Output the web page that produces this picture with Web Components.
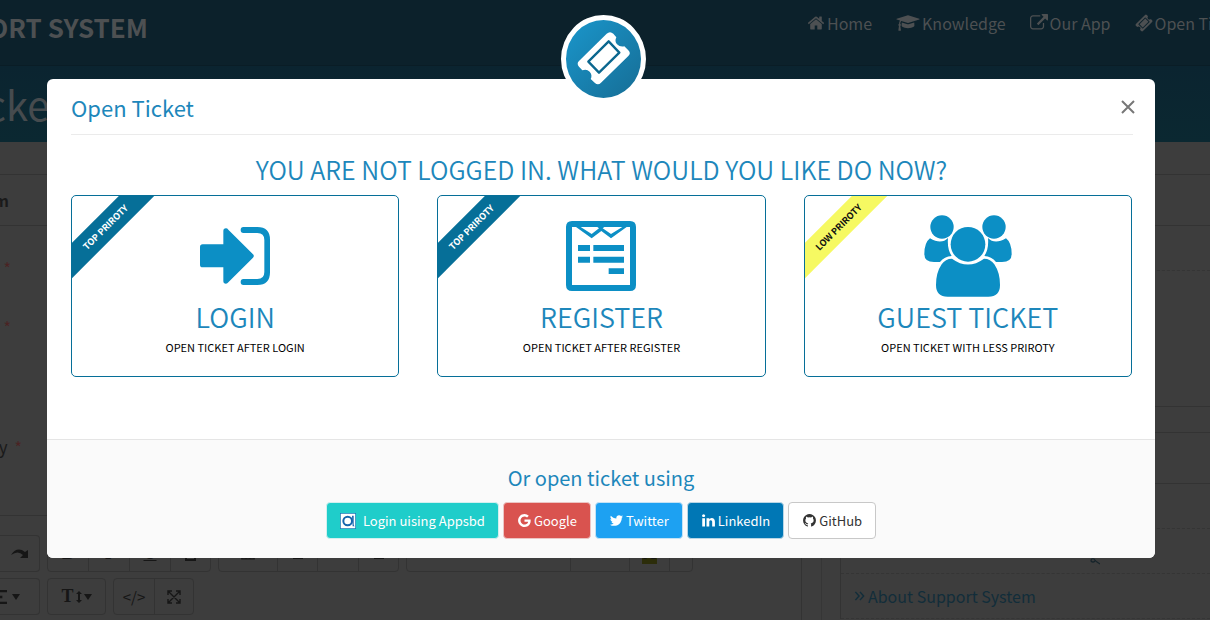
<!DOCTYPE html>
<html lang="en">
<head>
<meta charset="utf-8">
<title>Support System - Open Ticket</title>
<style>
  body {
    display: flex;
    flex-direction: column;
    margin: 0;
    height: 100vh;
    overflow: hidden;
    background: #3d3d3d;
    color: #1a1a1a;
    font-family: "Noto Sans CJK SC", "Noto Sans", sans-serif;
    font-size: 16px;
    --brand: #1d87bb;
    --brand-dark: #066f98;
    --rule: #333;
  }
  .columns { display: flex; flex: 1; min-height: 0; overflow: hidden; }
  ticket-form { flex: 1; }
  side-column { flex: 0 0 389px; }
</style>
</head>
<body>
<site-header></site-header>
<page-banner>Open Ticket</page-banner>
<div class="columns">
  <ticket-form></ticket-form>
  <side-column></side-column>
</div>
<ticket-modal heading="Open Ticket">
  <choice-card icon="login" ribbon="TOP PRIROTY" heading="LOGIN">OPEN TICKET AFTER LOGIN</choice-card>
  <choice-card icon="register" ribbon="TOP PRIROTY" heading="REGISTER">OPEN TICKET AFTER REGISTER</choice-card>
  <choice-card icon="guests" ribbon="LOW PRIROTY" low heading="GUEST TICKET">OPEN TICKET WITH LESS PRIROTY</choice-card>
  <social-button slot="social" kind="appsbd">Login uising Appsbd</social-button>
  <social-button slot="social" kind="google">Google</social-button>
  <social-button slot="social" kind="twitter">Twitter</social-button>
  <social-button slot="social" kind="linkedin">LinkedIn</social-button>
  <social-button slot="social" kind="github">GitHub</social-button>
</ticket-modal>

<script>
const fa = (d, w = 1792) => `<svg viewBox="0 0 ${w} 1792" aria-hidden="true"><path d="${d}"/></svg>`;
const ICONS = {
  home: fa("M1472 992v480q0 26-19 45t-45 19h-384v-384h-256v384h-384q-26 0-45-19t-19-45v-480q0-1 .5-3t.5-3l575-474 575 474q1 2 1 6zm223-69l-62 74q-8 9-21 11h-3q-13 0-21-7l-692-577-692 577q-12 8-24 7-13-2-21-11l-62-74q-8-10-7-23.5t11-21.5l719-599q32-26 76-26t76 26l244 204v-195q0-14 9-23t23-9h192q14 0 23 9t9 23v408l219 182q10 8 11 21.5t-7 23.5z"),
  cap: fa("M1774 836l18 316q4 69-82 128t-235 93.5-323 34.5-323-34.5-235-93.5-82-128l18-316 574 181q22 7 48 7t48-7zm530-324q0 23-22 31l-1120 352q-4 1-10 1t-10-1l-652-206q-43 34-71 111.5t-34 178.5q63 36 63 109 0 69-58 107l58 433q2 14-8 25-9 11-24 11h-192q-15 0-24-11-10-11-8-25l58-433q-58-38-58-107 0-73 65-111 11-207 98-330l-333-104q-22-8-22-31t22-31l1120-352q4-1 10-1t10 1l1120 352q22 8 22 31z", 2304),
  external: fa("M1408 928v320q0 119-84.5 203.5t-203.5 84.5h-832q-119 0-203.5-84.5t-84.5-203.5v-832q0-119 84.5-203.5t203.5-84.5h704q14 0 23 9t9 23v64q0 14-9 23t-23 9h-704q-66 0-113 47t-47 113v832q0 66 47 113t113 47h832q66 0 113-47t47-113v-320q0-14 9-23t23-9h64q14 0 23 9t9 23zm384-864v512q0 26-19 45t-45 19-45-19l-176-176-652 652q-10 10-23 10t-23-10l-114-114q-10-10-10-23t10-23l652-652-176-176q-19-19-19-45t19-45 45-19h512q26 0 45 19t19 45z"),
  ticket: fa("M1024 452l316 316-572 572-316-316zm-211 979l618-618q19-19 19-45t-19-45l-362-362q-18-18-45-18t-45 18l-618 618q-19 19-19 45t19 45l362 362q18 18 45 18t45-18zm889-637l-907 908q-37 37-90.5 37t-90.5-37l-126-126q56-56 56-136t-56-136-136-56-136 56l-125-126q-37-37-37-90.5t37-90.5l907-906q37-37 90.5-37t90.5 37l125 125q-56 56-56 136t56 136 136 56 136-56l126 125q37 37 37 90.5t-37 90.5z"),
  google: fa("M896 786h725q12 67 12 128 0 217-91 387.5t-259.5 266.5-386.5 96q-157 0-299-60.5t-245-163.5-163.5-245-60.5-299 60.5-299 163.5-245 245-163.5 299-60.5q300 0 515 201l-209 201q-123-119-306-119-129 0-238.5 65t-173.5 176.5-64 243.5 64 243.5 173.5 176.5 238.5 65q87 0 160-24t120-60 82-82 51.5-87 22.5-78h-436v-264z"),
  twitter: fa("M1684 408q-67 98-162 167 1 14 1 42 0 130-38 259.5t-115.5 248.5-184.5 210.5-258 146-323 54.5q-271 0-496-145 35 4 78 4 225 0 401-138-105-2-188-64.5t-114-159.5q33 5 61 5 43 0 85-11-112-23-185.5-111.5t-73.5-205.5v-4q68 38 146 41-66-44-105-115t-39-154q0-88 44-163 121 149 294.5 238.5t371.5 99.5q-8-38-8-74 0-134 94.5-228.5t228.5-94.5q140 0 236 102 109-21 205-78-37 115-142 178 93-10 186-50z"),
  linkedin: fa("M477 625v991h-330v-991h330zm21-306q1 73-50.5 122t-135.5 49h-2q-82 0-132-49t-50-122q0-74 51.5-122.5t134.5-48.5 133 48.5 51 122.5zm1166 729v568h-329v-530q0-105-40.5-164.5t-126.5-59.5q-63 0-105.5 34.5t-63.5 85.5q-11 30-11 81v553h-329q2-399 2-647t-1-296l-1-48h329v144h-2q20-32 41-56t56.5-52 87-43.5 114.5-15.5q171 0 275 113.5t104 332.5z"),
  github: fa("M896 128q209 0 385.5 103t279.5 279.5 103 385.5q0 251-146.5 451.5t-378.5 277.5q-27 5-40-7t-13-30q0-3 .5-76.5t.5-134.5q0-97-52-142 57-6 102.5-18t94-39 81-66.5 53-105 20.5-150.5q0-119-79-206 37-91-8-204-28-9-81 11t-92 44l-38 24q-93-26-192-26t-192 26q-16-11-42.5-27t-83.5-38.5-85-13.5q-45 113-8 204-79 87-79 206 0 85 20.5 150t52.5 105 80.5 67 94 39 102.5 18q-39 36-49 103-21 10-45 15t-57 5-65.5-21.5-55.5-62.5q-19-32-48.5-52t-49.5-24l-20-3q-21 0-29 4.5t-5 11.5 9 14 13 12l7 5q22 10 43.5 38t31.5 51l10 23q13 38 44 61.5t67 30 69.5 7 55.5-3.5l23-4q0 38 .5 88.5t.5 54.5q0 18-13 30t-40 7q-232-77-378.5-277.5t-146.5-451.5q0-209 103-385.5t279.5-279.5 385.5-103z"),
  appsbd: `<svg viewBox="0 0 48 48" aria-hidden="true"><rect x="1" y="1" width="46" height="46" fill="#fff" stroke="#1b6fb5" stroke-width="2"/><path d="M36 8h5v26q0 5 3 6h-6z" fill="#1565ad"/><circle cx="23" cy="24" r="13" fill="none" stroke="#1565ad" stroke-width="6"/></svg>`,
  angles: `<svg viewBox="0 0 12 12" aria-hidden="true"><path d="M1.500 1.500 5.500 6l-4 4.500M6.500 1.500l4 4.500-4 4.500" fill="none" stroke="currentColor" stroke-width="1.600"/></svg>`,
  login: `<svg viewBox="390 78 270 270" aria-hidden="true"><path d="M428 178h62v-40q0-8 8-8 4 0 7 4l74 74q5 5 0 10l-74 74q-3 4-7 4-8 0-8-8v-41h-62q-8 0-8-8v-53q0-8 8-8z"/><path d="M550 126h42q38 0 38 38v98q0 38-38 38h-42q-8 0-8-9t8-9h42q21 0 21-21v-96q0-21-21-21h-42q-8 0-8-9t8-9z"/></svg>`,
  register: `<svg viewBox="378 78 270 270" aria-hidden="true"><path fill-rule="evenodd" d="M426 108h174q18 0 18 18v174q0 18-18 18h-174q-18 0-18-18v-174q0-18 18-18zm0 18v174h174v-174h-10l-47 34-29-22-29 22-47-34zm26 0l33 21 22-17-5-4zm71 0-5 4 25 17 34-21z"/><path d="M444 180h36v18h-36zM490 180h92v18h-92zM444 215h36v18h-36zM490 215h92v18h-92zM536 250h46v17h-46z"/></svg>`,
  guests: `<svg viewBox="397 78 270 270" aria-hidden="true"><circle cx="454" cy="126" r="35"/><circle cx="610" cy="126" r="35"/><path d="M418 160q34 20 54-1-3 34 11 54-22 1-35 18h-18q-29 0-29-24 0-34 17-47zM646 160q-34 20-54-1 3 34-11 54 22 1 35 18h18q29 0 29-24 0-34-17-47z"/><circle cx="532" cy="178" r="52"/><path d="M484 221q48 35 96 0 20 0 31 17 17 25 17 62 0 35-35 35h-122q-35 0-35-35 0-37 17-62 11-17 31-17z"/></svg>`,
  bigTicket: `<svg viewBox="78 60 225 234" aria-hidden="true"><path fill="#fff" d="M200 101q10-9 20 0l9 11q-6 12 2 21 9 9 22 6l12 12q9 9 0 17l-82 80q-9 10-19 0l-12-11q6-12-3-22-9-9-22-4l-10-11q-8-9 0-17z"/><path fill="none" stroke="#0b678f" stroke-width="7" stroke-linejoin="round" d="M206 124l32 34-61 60-32-33z"/></svg>`,
  close: `<svg viewBox="0 0 14 14" aria-hidden="true"><path d="M1 1l12 12M13 1 1 13" fill="none" stroke="#777" stroke-width="2"/></svg>`,
  redo: `<svg viewBox="0 0 18 12" aria-hidden="true"><path d="M0 7Q6-2 14 4l3-2v8H9l3-3Q7 2 0 7z"/></svg>`,
  align: `<svg viewBox="0 0 12 12" aria-hidden="true"><path d="M0 0h12v2H0zM0 5h8v2H0zM0 10h12v2H0z"/></svg>`,
  caret: `<svg viewBox="0 0 8 6" aria-hidden="true"><path d="M0 0h8L4 6z"/></svg>`,
  updown: `<svg viewBox="0 0 6 12" aria-hidden="true"><path d="M3 0l3 3H4v6h2l-3 3-3-3h2V3H0z"/></svg>`,
  expand: `<svg viewBox="0 0 14 14" aria-hidden="true"><path d="M1 5V1h4M9 1h4v4M13 9v4H9M5 13H1V9M1 1l12 12M13 1 1 13" fill="none" stroke="currentColor" stroke-width="1.400"/></svg>`,
  table: `<svg viewBox="0 0 17 14" aria-hidden="true"><path d="M1 1h15v12H1zM1 5h15M1 9h15M6 1v12M11 1v12" fill="none" stroke="currentColor" stroke-width="1.500"/></svg>`,
  tail: `<svg viewBox="0 0 10 7" aria-hidden="true"><path d="M5 3Q3 5 1 3q0-3 3-2 2 3 6 5" fill="none" stroke="currentColor" stroke-width="1.200"/></svg>`,
  box: `<svg viewBox="0 0 12 14" aria-hidden="true"><path d="M1 1h9v12H1z" fill="none" stroke="currentColor" stroke-width="2"/></svg>`
};

class Base extends HTMLElement {
  connectedCallback() {
    if (this.shadowRoot) return;
    this.attachShadow({ mode: "open" }).innerHTML =
      `<style>:host,*{box-sizing:border-box}svg{display:block;fill:currentColor}h1,h2,h3,p{margin:0;font-weight:400}</style>` + this.render();
  }
}

customElements.define("ui-icon", class extends Base {
  render() {
    return `<style>:host{display:block;flex:none}svg{width:100%;height:100%}</style>${ICONS[this.getAttribute("name")]}`;
  }
});

customElements.define("site-header", class extends Base {
  render() {
    const item = (icon, label, wide) =>
      `<a href="#"><ui-icon name="${icon}" class="${wide ? "wide" : ""}"></ui-icon>${label}</a>`;
    return `<style>
      :host{display:flex;flex:none;justify-content:space-between;height:66px;background:#0c212b;color:#4d5052;border-bottom:1px solid #0a1d26}
      .brand{display:flex;justify-content:flex-end;width:148px;overflow:hidden;white-space:nowrap;font-size:26px;font-weight:700;line-height:54px}
      nav{display:flex;gap:24px;flex:0 0 403px;overflow:hidden;white-space:nowrap;font-size:16px}
      a{display:flex;align-items:center;gap:2px;color:inherit;text-decoration:none;height:46px}
      ui-icon{width:18px;height:18px}
      .wide{width:24px;height:18px}
    </style>
    <div class="brand">SUPPORT SYSTEM</div>
    <nav>${item("home", "Home")}${item("cap", "Knowledge", true)}${item("external", "Our App")}${item("ticket", "Open Ticket")}</nav>`;
  }
});

customElements.define("page-banner", class extends Base {
  render() {
    return `<style>
      :host{display:block;flex:none;height:76px;background:linear-gradient(#0b2430,#0b2831);color:#464b4e}
      h1{display:flex;justify-content:flex-end;width:64px;white-space:nowrap;font-size:40px;line-height:76px}
    </style><h1><slot></slot></h1>`;
  }
});

customElements.define("ticket-form", class extends Base {
  render() {
    const cell = (w, content = "", cls = "") => `<button type="button" class="${cls}" style="width:${w}px">${content}</button>`;
    const icon = (name, cls = "") => `<ui-icon name="${name}" class="${cls}"></ui-icon>`;
    return `<style>
      :host{display:block;margin-top:32px;border:1px solid var(--rule);border-width:1px 1px 0 0;color:#1a1a1a}
      .cut{display:flex;justify-content:flex-end;overflow:hidden;white-space:nowrap;width:11px;line-height:24px;gap:7px}
      .cut i{font-style:normal;font-size:16px;color:#4b2323}
      .head{width:9px;font-weight:700;line-height:50px;font-size:16px}
      .rule{border-top:1px solid var(--rule)}
      .fields{height:290px;padding-top:30px;font-size:17px}
      .fields .cut{margin-bottom:35px}
      .fields .cut:nth-child(3){width:22px;margin-top:96px}
      .bar{display:flex;gap:7px;margin-top:19px}
      .bar + .bar{margin-top:6px}
      .group{display:flex;height:37px;border:1px solid var(--rule);border-radius:4px}
      .group.first{border-left:0;border-radius:0 4px 4px 0}
      button{display:flex;align-items:center;justify-content:center;gap:2px;background:none;border:0;border-left:1px solid var(--rule);padding:0;color:#161616;font:700 18px "Liberation Serif",serif}
      button:first-child{border-left:0}
      button.cutoff{justify-content:flex-end;gap:5px;padding-right:19px}
      ui-icon{width:14px;height:14px}
      .low{width:14px;height:10px}
      .redo{width:18px;height:12px}.caret{width:8px;height:6px}.updown{width:6px;height:12px}
      .thin{font:400 15px "Noto Sans CJK SC","Noto Sans",sans-serif}
      mark{background:#2c2d0a;color:inherit;padding:0 1px}
    </style>
    <div class="cut head">Open Ticket Form</div>
    <div class="rule fields">
      <div class="cut"><span>Name</span><i>*</i></div>
      <div class="cut"><span>Email</span><i>*</i></div>
      <div class="cut"><span>Category</span><i>*</i></div>
    </div>
    <div class="rule"></div>
    <div class="bar">
      <div class="group first">${cell(39, icon("redo", "redo"))}</div>
      <div class="group">${cell(40, "B")}${cell(41, "<em>I</em>")}${cell(41, "<u>U</u>")}${cell(40, icon("box"))}</div>
      <div class="group">${cell(58, icon("table"))}${cell(40, icon("align", "low"))}${cell(41)}${cell(40, icon("align", "low"))}</div>
      <div class="group">${cell(163)}${cell(59)}${cell(40, "<mark>A</mark>")}${cell(23)}</div>
    </div>
    <div class="bar">
      <div class="group first">${cell(39, icon("align") + icon("caret", "caret"), "cutoff")}</div>
      <div class="group">${cell(57, "T" + icon("updown", "updown") + icon("caret", "caret"))}</div>
      <div class="group">${cell(40, '<span class="thin">&lt;/&gt;</span>')}${cell(39, icon("expand"))}</div>
    </div>`;
  }
});

customElements.define("side-column", class extends Base {
  render() {
    return `<style>
      :host{display:block;margin-left:19px;padding:32px 0 0 18px;border-left:1px solid #363636}
      section{border:1px solid var(--rule);border-width:1px 0 1px 1px;margin-bottom:25px}
      section:last-child{margin-bottom:0;border-bottom:0}
      .head{height:51px;border-bottom:1px solid var(--rule)}
      .row{display:flex;align-items:center;height:45px;padding-left:13px;border-bottom:1px dashed #353535;font-size:16px}
      .tall{height:135px;border:0}
      a{display:flex;align-items:center;gap:3px;color:#122d3a;text-decoration:none}
      ui-icon{width:11px;height:12px}
      .tail{width:10px;height:7px;margin:20px 0 0 236px;color:#16242b}
    </style>
    <section><div class="head"></div><div class="row"></div><div class="tall"></div></section>
    <section><div class="head"></div><div class="row"></div><div class="row"><ui-icon name="tail" class="tail"></ui-icon></div>
      <div class="row"><a href="#"><ui-icon name="angles"></ui-icon>About Support System</a></div></section>`;
  }
});

customElements.define("ticket-modal", class extends Base {
  render() {
    return `<style>
      :host{position:fixed;inset:0;padding:79px 55px 0 47px}
      .dialog{position:relative;background:#fff;border-radius:6px;color:var(--brand)}
      .badge{position:absolute;top:-64px;left:calc(50% - 40px);width:85px;height:88px;border:5px solid #fff;border-radius:50%;overflow:hidden;background:linear-gradient(135deg,#1a96cb,#166d95)}
      .badge ui-icon{width:75px;height:78px}
      header{display:flex;justify-content:space-between;align-items:flex-start;margin:0 22px 0 24px;padding:14px 0 13px;border-bottom:1px solid #ebebeb}
      header h2{font-size:22px;line-height:28px}
      header button{border:0;background:none;padding:7px 0;margin-right:-2px}
      header ui-icon{width:14px;height:14px}
      .body{padding:16px 23px 62px 24px}
      .body h3{font-size:25px;line-height:36px;font-weight:350;margin-bottom:8px;text-align:center}
      .cards{display:grid;grid-template-columns:repeat(3,1fr);gap:38px}
      footer{border-top:1px solid #e5e5e5;background:#fafafa;border-radius:0 0 6px 6px;padding:22px 0 19px}
      footer h3{font-size:20px;line-height:32px;margin-bottom:8px;text-align:center}
      .social{display:flex;justify-content:center;gap:4px}
    </style>
    <div class="dialog" role="dialog" aria-labelledby="t">
      <div class="badge"><ui-icon name="bigTicket"></ui-icon></div>
      <header><h2 id="t">${this.getAttribute("heading")}</h2><button type="button" aria-label="Close"><ui-icon name="close"></ui-icon></button></header>
      <div class="body">
        <h3>YOU ARE NOT LOGGED IN. WHAT WOULD YOU LIKE DO NOW?</h3>
        <div class="cards"><slot></slot></div>
      </div>
      <footer><h3>Or open ticket using</h3><div class="social"><slot name="social"></slot></div></footer>
    </div>`;
  }
});

customElements.define("choice-card", class extends Base {
  render() {
    return `<style>
      :host{display:block}
      a{position:relative;display:flex;flex-direction:column;align-items:center;overflow:hidden;border:1px solid var(--brand-dark);border-radius:5px;padding:15px 0 19px;color:#111;text-decoration:none}
      ui-icon{width:90px;height:90px;color:#0c8fc5}
      h3{font-size:27px;line-height:32px;font-weight:350;color:var(--brand);margin-bottom:4px}
      p{font-size:11px;line-height:20px;color:#000}
      .ribbon{position:absolute;left:-38px;top:20px;width:140px;line-height:25px;text-align:center;transform:rotate(-45deg);background:var(--brand-dark);color:#fff;font-size:9px;font-weight:700;padding-left:4px}
      :host([low]) .ribbon{background:#f6f962;color:#111}
    </style>
    <a href="#"><span class="ribbon">${this.getAttribute("ribbon")}</span>
      <ui-icon name="${this.getAttribute("icon")}"></ui-icon>
      <h3>${this.getAttribute("heading")}</h3><p><slot></slot></p></a>`;
  }
});

customElements.define("social-button", class extends Base {
  render() {
    const kind = this.getAttribute("kind");
    return `<style>
      :host{display:block;--bg:#1fcdca;--edge:#d2f0ef}
      :host([kind=google]){--bg:#d9534f;--edge:#ecc5c4}
      :host([kind=twitter]){--bg:#1da1f2;--edge:#c4e2f5}
      :host([kind=linkedin]){--bg:#0077b5;--edge:#b8d6e6}
      :host([kind=github]){--bg:#fff;--edge:#c8c8c8;--ink:#333}
      button{display:flex;align-items:center;gap:2px;height:37px;padding:0 13px;border:1px solid var(--edge);border-radius:4px;background:var(--bg);color:var(--ink,#fff);font:inherit;font-size:13px;line-height:20px}
      ui-icon{width:15px;height:15px}
      .appsbd{width:16px;height:16px;margin-right:5px}
    </style><button type="button"><ui-icon class="${kind}" name="${kind}"></ui-icon><slot></slot></button>`;
  }
});
</script>
</body>
</html>
